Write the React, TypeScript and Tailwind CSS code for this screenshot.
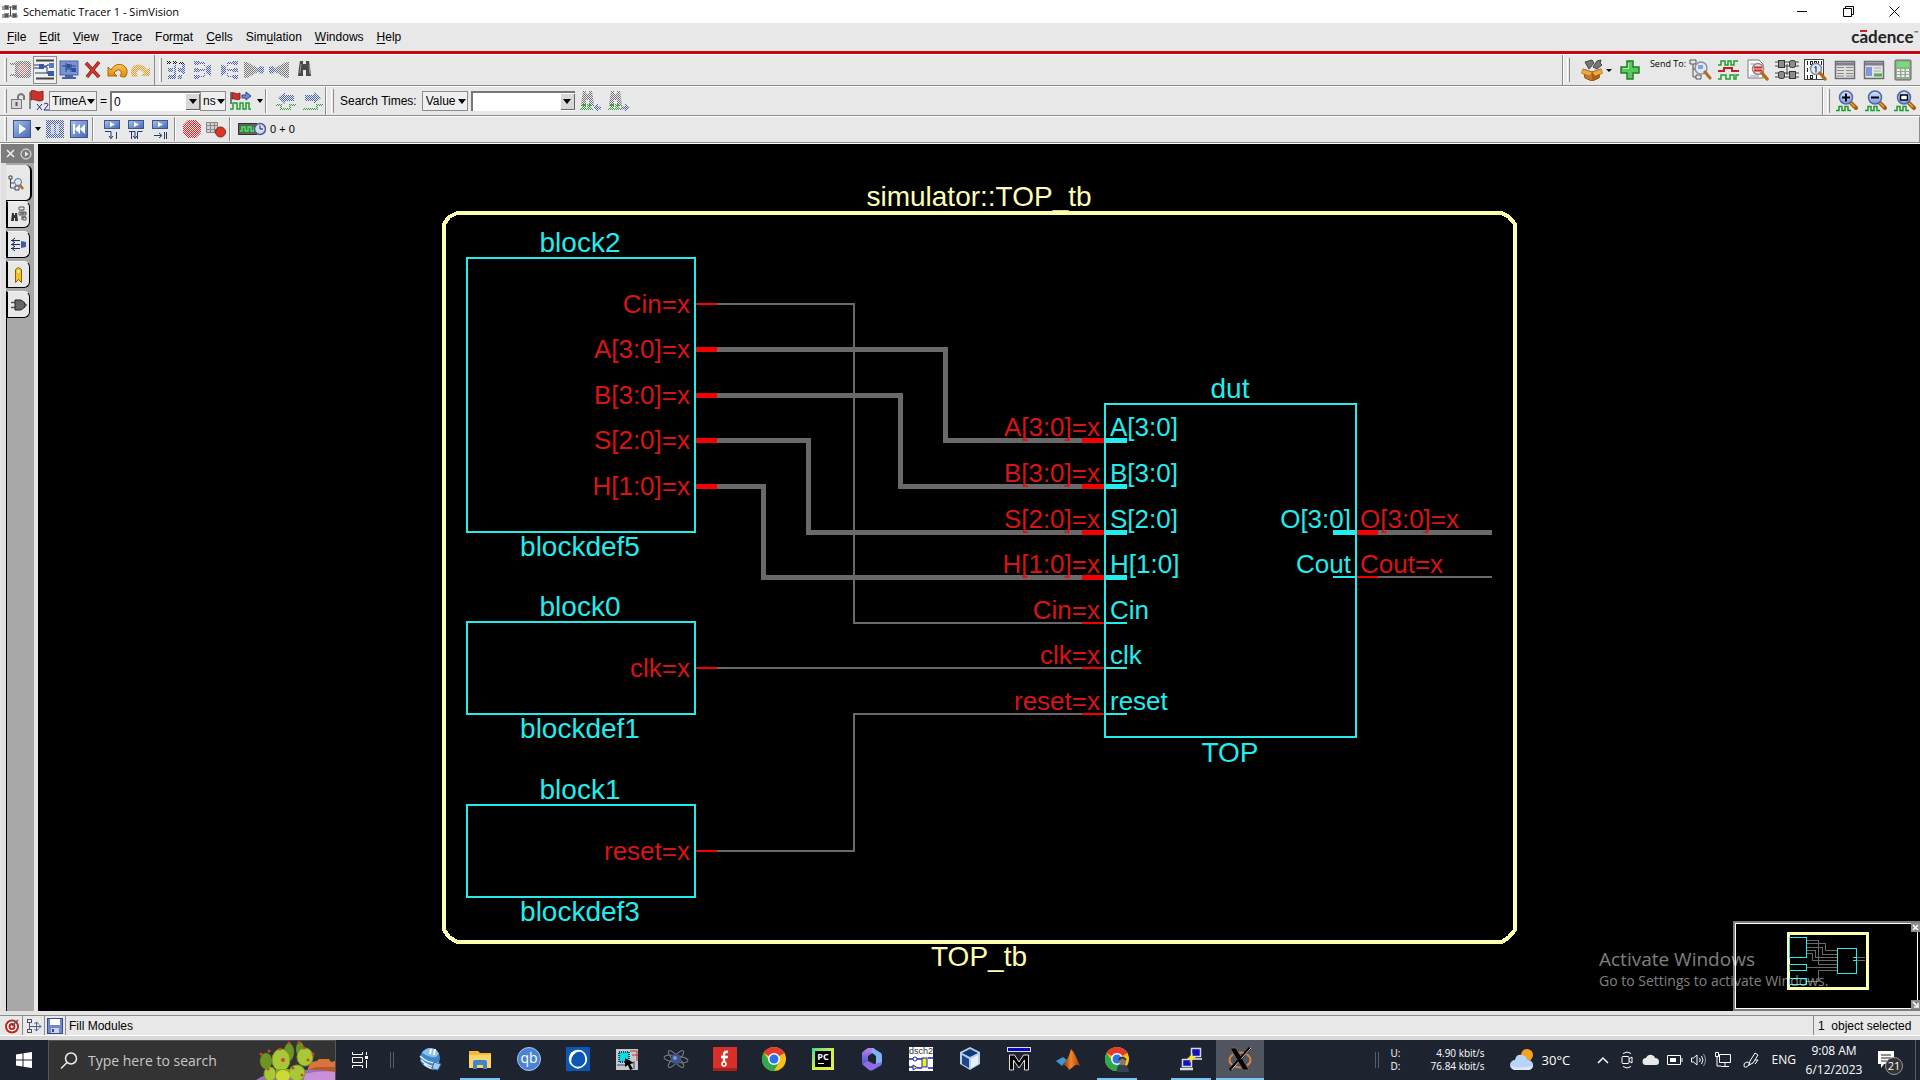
import React, { ReactNode } from "react";

type IconProps = { w?: number; h?: number; vw?: number; vh?: number; children: ReactNode };

function Icon({ w = 22, h = 22, vw, vh, children }: IconProps) {
  return (
    <svg width={w} height={h} viewBox={`0 0 ${vw ?? w} ${vh ?? h}`} fill="none" aria-hidden="true" className="block shrink-0">
      {children}
    </svg>
  );
}

function Tool({ label, children, className = "w-6 h-6" }: { label: string; children: ReactNode; className?: string }) {
  return (
    <button type="button" aria-label={label} title={label} className={`flex shrink-0 items-center justify-center ${className}`}>
      {children}
    </button>
  );
}

function Handle() {
  return <span className="h-6 w-[3px] shrink-0 border-l border-r border-l-white border-r-[#8c8c8c]" />;
}

function Divider() {
  return <span className="h-6 w-[2px] shrink-0 border-l border-r border-l-[#8c8c8c] border-r-white" />;
}

function Caret({ className = "" }: { className?: string }) {
  return (
    <svg width="8" height="5" viewBox="0 0 8 5" aria-hidden="true" className={`shrink-0 ${className}`}>
      <path d="M0 0h8L4 5z" fill="#000" />
    </svg>
  );
}

/* Shared checkerboard fills used by greyed-out tool icons */
function Stipples() {
  const tones = [
    ["st-blue", "#4a62a8"],
    ["st-red", "#e02828"],
    ["st-rose", "#c88080"],
    ["st-grey", "#777777"],
    ["st-black", "#111111"],
    ["st-green", "#2fa23a"],
    ["st-gold", "#e09a10"],
  ];
  return (
    <svg width="0" height="0" className="absolute" aria-hidden="true">
      <defs>
        {tones.map(([id, color]) => (
          <pattern key={id} id={id} width="2" height="2" patternUnits="userSpaceOnUse">
            <path d="M0 0h1v1h-1zM1 1h1v1h-1z" fill={color} shapeRendering="crispEdges" />
          </pattern>
        ))}
        <linearGradient id="g-blue" x1="0" y1="0" x2="1" y2="1">
          <stop offset="0" stopColor="#a8bfe8" />
          <stop offset="1" stopColor="#4468b4" />
        </linearGradient>
        <linearGradient id="g-gold" x1="0" y1="0" x2="0" y2="1">
          <stop offset="0" stopColor="#ffc850" />
          <stop offset="1" stopColor="#e08808" />
        </linearGradient>
        <linearGradient id="g-lens" x1="0" y1="0" x2="0" y2="1">
          <stop offset="0" stopColor="#d8e6fa" />
          <stop offset="1" stopColor="#7c9ce0" />
        </linearGradient>
        <linearGradient id="g-office" x1="0" y1="0" x2="0" y2="1">
          <stop offset="0" stopColor="#c080f0" />
          <stop offset="1" stopColor="#4858c8" />
        </linearGradient>
        <linearGradient id="g-matlab" x1="0" y1="0" x2="1" y2="0">
          <stop offset="0" stopColor="#7c1c10" />
          <stop offset="0.5" stopColor="#f08828" />
          <stop offset="1" stopColor="#b03410" />
        </linearGradient>
      </defs>
    </svg>
  );
}

const menus: [string, string, string][] = [
  ["", "F", "ile"],
  ["", "E", "dit"],
  ["", "V", "iew"],
  ["", "T", "race"],
  ["For", "m", "at"],
  ["", "C", "ells"],
  ["Sim", "u", "lation"],
  ["", "W", "indows"],
  ["", "H", "elp"],
];

function TitleBar() {
  return (
    <header className="flex h-[23px] shrink-0 items-center bg-white pr-[3px] pl-[2px]">
      <Icon w={16} h={16}>
        <g fill="#555" stroke="#888" strokeWidth="1">
          <rect x="2.500" y="1.500" width="4" height="4" />
          <rect x="10.500" y="1.500" width="4" height="4" />
          <rect x="2.500" y="9.500" width="4" height="4" />
          <rect x="10.500" y="9.500" width="4" height="4" />
        </g>
        <path d="M0 3h2M0 5h2M0 11h2M0 13h2M7 3h3M7 12h3M8.500 3v9M15 12h1" stroke="#444" />
      </Icon>
      <h1 className="ml-[5px] flex-1 font-['Open_Sans','Noto_Sans',sans-serif] text-[11px] leading-4 text-black">Schematic Tracer 1 - SimVision</h1>
      <Tool label="Minimize" className="h-5 w-[46px]">
        <Icon w={10} h={10}><path d="M0 4.500h10" stroke="#000" /></Icon>
      </Tool>
      <Tool label="Restore" className="h-5 w-[46px]">
        <Icon w={11} h={11}><path d="M.5 2.500h8v8h-8zM2.500 2.500v-2h8v8h-2" stroke="#000" /></Icon>
      </Tool>
      <Tool label="Close" className="h-5 w-[46px]">
        <Icon w={11} h={11}><path d="M.5.5l10 10M10.500.5l-10 10" stroke="#000" /></Icon>
      </Tool>
    </header>
  );
}

function MenuBar() {
  return (
    <nav className="flex h-[31px] shrink-0 items-center border-b-[3px] border-[#c80510] pl-[7px]">
      {menus.map(([a, b, c]) => (
        <button type="button" key={a + b + c} className="mr-[13px] text-xs leading-4 text-black">
          {a}
          <span className="underline underline-offset-2">{b}</span>
          {c}
        </button>
      ))}
      <div className="relative mr-[2px] ml-auto flex items-start font-['Lato',sans-serif] text-[17px] leading-5 font-bold text-[#222]">
        cadence<span className="text-[6px] leading-3 font-normal">™</span>
        <span className="absolute top-[3px] left-[9px] h-[2px] w-[7px] bg-[#d02030]" />
      </div>
    </nav>
  );
}

/* Toolbar glyphs */
const StippledNodes = ({ flip = false }: { flip?: boolean }) => (
  <Icon>
    <g transform={flip ? "translate(22 0) scale(-1 1)" : undefined} fill="url(#st-blue)">
      <rect x="2" y="2" width="5" height="4" /><rect x="2" y="9" width="5" height="4" /><rect x="2" y="16" width="5" height="4" />
      <path d="M14 8l5-3v12l-5-3z" />
      <path d="M7 3h6v5h-1V5H7zM7 10h6v2H7zM7 17h5v-4h1v5H7z" />
    </g>
  </Icon>
);
const StippledCone = ({ flip = false }: { flip?: boolean }) => (
  <Icon>
    <g transform={flip ? "translate(22 0) scale(-1 1)" : undefined}>
      <path d="M1 3h3l11 6v4L4 19H1z" fill="url(#st-grey)" />
      <path d="M14 11l3-4 4 1v6l-4 1z" fill="url(#st-blue)" />
    </g>
  </Icon>
);
const ZoomGlyph = ({ mark }: { mark: "plus" | "minus" | "rect" }) => (
  <Icon w={24} h={22}>
    <path d="M1 20.500h3v-4h3v4h3v-4h3v4h3" stroke="#1f9a2c" strokeWidth="1.500" />
    <path d="M15 12l6 6" stroke="#a35a12" strokeWidth="4" strokeLinecap="round" />
    <path d="M15 12l5 5" stroke="#e8a040" strokeWidth="1.500" />
    <circle cx="11" cy="7.500" r="6.500" fill="url(#g-lens)" stroke="#5068a8" strokeWidth="1.500" />
    {mark === "plus" && <path d="M7 7.500h8M11 3.500v8" stroke="#000" strokeWidth="2" />}
    {mark === "minus" && <path d="M7 7.500h8" stroke="#000" strokeWidth="2" />}
    {mark === "rect" && <rect x="7.500" y="5" width="7" height="5" stroke="#000" fill="#fff" strokeWidth="1.500" />}
  </Icon>
);
const Bino = ({ fill = "#4a4a4a" }: { fill?: string }) => (
  <path d="M6 2h3v3h3V2h3l1 6 1 9h-5v-6H9v6H4l1-9z" fill={fill} />
);
const SearchTimeGlyph = ({ left = false }: { left?: boolean }) => (
  <Icon w={24} h={22}>
    <g transform="translate(-2 -1)"><Bino fill="url(#st-grey)" /></g>
    <path d="M1 19h3v-4h2v4h3v-4h2v4h3" stroke="url(#st-green)" strokeWidth="2" />
    <path d={left ? "M14 17.500l5-4v3h3v3h-3v2z" : "M23 17.500l-5-4v3h-4v3h4v2z"} fill="url(#st-blue)" />
  </Icon>
);
const StepGlyph = ({ d }: { d: string }) => (
  <Icon w={18} h={22}>
    <rect x="1.500" y="2.500" width="15" height="8" fill="url(#g-blue)" stroke="#3c5490" />
    <path d="M7 4l5 2.500L7 9z" fill="#fff" />
    <path d={d} stroke="#25376e" strokeWidth="1" />
  </Icon>
);

const selectBase = "h-5 appearance-none border border-[#8c8c8c] bg-[#efefef] text-xs leading-4 text-black";

function Toolbars() {
  return (
    <div className="flex shrink-0 flex-col border-b border-white">
      <div className="flex h-8 items-stretch border-t border-b border-t-white border-b-[#8c8c8c]">
        <div className="flex items-center border-r border-[#8c8c8c] pr-[1px] pl-1">
          <Handle />
          <Tool label="Select drivers" className="ml-[2px] h-6 w-6">
            <Icon>
              <rect x="5" y="2" width="16" height="17" rx="3" fill="url(#st-grey)" />
              <circle cx="13" cy="10.500" r="5" fill="#e8e8e8" />
              <circle cx="13" cy="10.500" r="5" fill="url(#st-rose)" />
              <path d="M0 4h5v2H0zM0 15h6v2H0z" fill="url(#st-grey)" />
            </Icon>
          </Tool>
          <Tool label="Schematic" className="h-7 w-6 border border-[#8c8c8c] bg-[#f0f0f0]">
            <Icon>
              <path d="M2 1.500h18M2 19.500h18" stroke="#444" strokeWidth="2" />
              <path d="M0 6h5M0 9h5M9 7h4v-1h3M9 8h4v6h3M1 14h15" stroke="#25376e" />
              <rect x="5" y="5" width="5" height="5" fill="#3858a8" /><rect x="15" y="4" width="5" height="5" fill="#5878c8" /><rect x="14" y="12" width="6" height="5" fill="#3858a8" />
            </Icon>
          </Tool>
          <Tool label="Fill view">
            <Icon>
              <rect x="2" y="2" width="18" height="14" fill="#7894d4" stroke="#4a62a4" />
              <path d="M4 7h14M8 10h9M8 4v9M13 5v8" stroke="#2c4484" />
              <rect x="9" y="5" width="3" height="4" fill="#2c4c9c" /><rect x="14" y="9" width="4" height="4" fill="#2c4c9c" />
              <path d="M4 19h14M7 17h8" stroke="#4a62a4" strokeWidth="2" />
            </Icon>
          </Tool>
          <Tool label="Delete">
            <Icon>
              <path d="M4 4l13 14M17 3L5 18" stroke="#8c1c14" strokeWidth="3.500" />
              <path d="M4 4l13 14M17 3L5 18" stroke="#cc3c30" strokeWidth="2" />
            </Icon>
          </Tool>
          <Tool label="Undo">
            <Icon><path d="M2 17V8l3 3c3-6 11-8 15-2 2 3 1 7-1 9-4 0-5-1-5-1 3-4 0-8-4-5l-2 2 3 3z" fill="url(#g-gold)" stroke="#a86408" /></Icon>
          </Tool>
          <Tool label="Redo">
            <Icon><path d="M20 17V8l-3 3C14 5 6 3 2 9c-2 3-1 7 1 9 4 0 5-1 5-1-3-4 0-8 4-5l2 2-3 3z" fill="url(#st-gold)" /></Icon>
          </Tool>
        </div>
        <div className="flex flex-1 items-center gap-[1px] border-r border-[#8c8c8c] pl-[4px]">
          <Handle />
          <Tool label="Trace route" className="ml-[1px] h-6 w-6">
            <Icon>
              <path d="M2 2h4v3H2zM8 2h4v3H8zM14 3h5v2h-5z" fill="url(#st-black)" />
              <path d="M3 9h5v4H3zM13 9h6v4h-6zM3 16h6v4H3zM13 16h4v4h-4zM9 6h2v14H9zM17 5h3v10h-3z" fill="url(#st-blue)" />
            </Icon>
          </Tool>
          <Tool label="Trace fan-in" className="ml-[2px] h-6 w-6"><StippledNodes /></Tool>
          <Tool label="Trace fan-out" className="ml-[1px] h-6 w-6"><StippledNodes flip /></Tool>
          <Tool label="Input cone"><StippledCone /></Tool>
          <Tool label="Output cone"><StippledCone flip /></Tool>
          <Tool label="Find" className="ml-[1px] h-6 w-6"><Icon><Bino /><path d="M7 5l-1 9M15 6l1 9" stroke="#999" /></Icon></Tool>
        </div>
        <div className="flex items-center gap-[5px] border-l border-white pr-[5px] pl-[3px]">
          <Handle />
          <Tool label="Tools" className="ml-[6px] h-6 w-8 gap-[3px]">
            <Icon w={22} h={22}>
              <path d="M4 3l7-2 2 3-5 6zM12 8l4-6 4-1-1 3 2 2-5 4z" fill="#777" stroke="#444" />
              <path d="M2 10l9 3 9-3-2 9-7 3-7-3z" fill="#c87820" stroke="#8c5010" />
              <path d="M11 13v9l7-3 2-9z" fill="#a86018" />
              <path d="M2 10L0 14l9 3 2-4zM20 10l2 4-8 3-3-4z" fill="#f0a840" stroke="#a06018" strokeWidth=".5" />
            </Icon>
            <svg width="6" height="3" viewBox="0 0 6 3"><path d="M0 0h6L3 3z" fill="#000" /></svg>
          </Tool>
          <Tool label="Add">
            <Icon w={20} h={20}><path d="M7 1h6v6h6v6h-6v6H7v-6H1V7h6z" fill="#5cc85c" stroke="#1c8028" strokeWidth="1.500" /><path d="M8.500 3v5.500H3" stroke="#b0f0a8" /></Icon>
          </Tool>
          <span className="-mr-[3px] mb-3 ml-[3px] text-[9px] leading-3 font-['Open_Sans',sans-serif] text-black">Send To:</span>
          <Tool label="Design browser">
            <Icon w={24} h={22}>
              <path d="M2 1h6v4H2zM8 16h5v4H8zM5 5v13h3M5 10h5" stroke="#555" fill="none" />
              <circle cx="13" cy="9" r="6" fill="#dfe8f8" stroke="#8490a8" strokeWidth="1.500" />
              <rect x="10" y="6" width="5" height="4" fill="#8aa0d8" />
              <path d="M17 13l5 6" stroke="#b46a18" strokeWidth="3" strokeLinecap="round" />
            </Icon>
          </Tool>
          <Tool label="Waveform">
            <Icon>
              <path d="M0 6h3V2h4v4h3V2h3v4h3V2h4" stroke="#1fa030" strokeWidth="1.500" />
              <path d="M0 12h6V9h8v3h7" stroke="#c02028" strokeWidth="2" />
              <path d="M0 20h3v-4h5v4h4v-4h4v4h2v-4h3" stroke="#1fa030" strokeWidth="1.500" />
            </Icon>
          </Tool>
          <Tool label="Source browser">
            <Icon w={24} h={22}>
              <path d="M2 1h11l4 4v14H2z" fill="#fff" stroke="#777" />
              <circle cx="12" cy="10" r="5.500" fill="#f0d8d8" stroke="#8c8c8c" strokeWidth="1.500" />
              <path d="M8 8.500h8M8 11.500h8" stroke="#d02828" strokeWidth="2" />
              <path d="M4 5h5M4 17h9" stroke="#999" />
              <path d="M16 14l5 6" stroke="#b46a18" strokeWidth="3.500" strokeLinecap="round" />
            </Icon>
          </Tool>
          <Tool label="Schematic tracer">
            <Icon w={24} h={22}>
              <path d="M0 3h24M0 7h24M0 14h24M0 18h24M12 5v11" stroke="#444" />
              <g fill="#8c8c8c" stroke="#333">
                <rect x="3.500" y="1.500" width="6" height="7" /><rect x="14.500" y="1.500" width="6" height="7" rx="2" />
                <rect x="3.500" y="12.500" width="6" height="7" rx="2" /><rect x="14.500" y="12.500" width="6" height="7" />
              </g>
            </Icon>
          </Tool>
          <Tool label="Memory viewer">
            <Icon w={24} h={22}>
              <rect x=".5" y=".5" width="19" height="20" fill="#fff" stroke="#444" />
              <g stroke="#222"><path d="M3.500 2v4M14.500 2v4M3.500 9v4M3.500 16v4M12.500 16v4M17.500 2v4" /><rect x="6.500" y="2.500" width="2" height="3" /><rect x="10.500" y="2.500" width="2" height="3" /><rect x="6.500" y="16.500" width="2" height="3" /></g>
              <circle cx="12" cy="10" r="5.500" fill="#dfeaf8" stroke="#7c8cac" strokeWidth="1.500" />
              <path d="M10.500 8.500l1.500-1v6" stroke="#111" />
              <path d="M16 14l5 6" stroke="#b46a18" strokeWidth="3.500" strokeLinecap="round" />
            </Icon>
          </Tool>
          <Tool label="Register window">
            <Icon>
              <rect x="1.500" y="2.500" width="19" height="17" fill="#e0e0dc" stroke="#6c6c74" strokeWidth="1.500" />
              <path d="M2 5h18" stroke="#7c8090" strokeWidth="3" />
              <path d="M3 8.500h7M3 11.500h7M3 14.500h7M3 17h7M12 8.500h7M12 11.500h7M12 14.500h7M12 17h7" stroke="#888" />
            </Icon>
          </Tool>
          <Tool label="Properties">
            <Icon>
              <rect x="1.500" y="2.500" width="19" height="17" fill="#e4e4e0" stroke="#6c6c74" strokeWidth="1.500" />
              <path d="M2 5h18" stroke="#7c8090" strokeWidth="3" />
              <rect x="3" y="8" width="6" height="9" fill="#8098d8" /><path d="M11 9h7M11 12h7" stroke="#aaa" /><path d="M11 16h8" stroke="#48b048" strokeWidth="3" />
            </Icon>
          </Tool>
          <Tool label="Calculator">
            <Icon w={18} h={22}>
              <rect x="1" y="1" width="16" height="20" rx="1" fill="#98a898" stroke="#606860" />
              <rect x="3" y="3" width="12" height="5" fill="#70e070" />
              <path d="M3 11h12M3 14h12M3 17h12" stroke="#e8f4e8" strokeWidth="2" strokeDasharray="3 1.500" />
            </Icon>
          </Tool>
        </div>
      </div>

      <div className="flex h-[30px] items-stretch border-t border-b border-t-white border-b-[#8c8c8c]">
        <div className="flex items-center border-r border-[#8c8c8c] pl-1">
          <Handle />
          <Tool label="Lock" className="ml-[3px] h-6 w-[18px]">
            <Icon w={18} h={20}>
              <path d="M8 9V5q3-4 6 0v4" stroke="#777" strokeWidth="2" />
              <rect x="1.500" y="8.500" width="10" height="9" fill="#d8d8d8" stroke="#777" /><path d="M6.500 11v4" stroke="#555" strokeWidth="2" />
            </Icon>
          </Tool>
          <Tool label="Primary cursor" className="h-6 w-[21px]">
            <Icon w={21} h={22}>
              <path d="M2 2v17" stroke="#888" strokeWidth="2" />
              <path d="M3 1c4-2 6 3 12 0v9c-5 3-8-2-12 0z" fill="#c8342c" stroke="#902018" />
              <path d="M9 14l5 6M14 14l-5 6M16 14q4-2 4 1l-4 5h5" stroke="#1c2c80" />
            </Icon>
          </Tool>
          <span className="relative flex h-5 items-center">
            <select aria-label="Cursor" className={`${selectBase} w-12 pl-[2px]`}>
              <option>TimeA</option>
            </select>
            <Caret className="pointer-events-none absolute right-[2px]" />
          </span>
          <span className="w-[13px] text-center text-xs leading-4">=</span>
          <div className="flex h-5 w-[90px] items-center border-t-2 border-l-2 border-[#777] bg-white">
            <input aria-label="Time" defaultValue="0" className="h-full min-w-0 flex-1 bg-white pl-[2px] text-xs leading-4 text-black outline-none" />
            <button type="button" aria-label="Time history" className="flex h-4 w-[14px] items-center justify-center border-r border-b border-[#666] bg-[#d8d8d8]"><Caret /></button>
          </div>
          <span className="relative flex h-5 items-center">
            <select aria-label="Unit" className={`${selectBase} w-[26px] pl-[2px]`}>
              <option>ns</option>
            </select>
            <Caret className="pointer-events-none absolute right-[1px]" />
          </span>
          <Tool label="Go to cursor" className="ml-[3px] h-6 w-[34px] gap-1">
            <Icon w={24} h={22}>
              <path d="M2 2v12" stroke="#777" strokeWidth="2" /><path d="M3 3c3-1 4 2 8 0v6c-4 2-5-1-8 0z" fill="#c8342c" stroke="#802018" />
              <path d="M13 5h4V2l5 4-5 4V8h-4z" fill="#6c8cd0" stroke="#2c4488" />
              <path d="M1 19h3v-6h4v6h3v-6h3v6h3v-6h3v6h2" stroke="#1fa030" strokeWidth="1.500" />
            </Icon>
            <svg width="6" height="4" viewBox="0 0 6 4"><path d="M0 0h6L3 4z" fill="#000" /></svg>
          </Tool>
          <span className="ml-[2px] flex"><Divider /></span>
          <Tool label="Previous edge" className="ml-[7px] h-6 w-6">
            <Icon><path d="M3 8l7-6v3h9v6h-9v3z" fill="url(#st-blue)" /><path d="M1 15h5v4h9v-4h6" stroke="url(#st-green)" strokeWidth="2" /></Icon>
          </Tool>
          <Tool label="Next edge" className="ml-[3px] h-6 w-6">
            <Icon><path d="M19 8l-7-6v3H3v6h9v3z" fill="url(#st-blue)" /><path d="M1 19h14v-4h6" stroke="url(#st-green)" strokeWidth="2" /></Icon>
          </Tool>
        </div>
        <div className="flex flex-1 items-center border-r border-l border-l-white border-r-[#8c8c8c] pl-[4px]">
          <Handle />
          <label htmlFor="search-kind" className="mr-[5px] ml-[6px] text-xs leading-4">Search Times:</label>
          <span className="relative flex h-5 items-center">
            <select id="search-kind" className={`${selectBase} w-[46px] pl-[3px]`}>
              <option>Value</option>
            </select>
            <Caret className="pointer-events-none absolute right-[2px]" />
          </span>
          <div className="ml-[3px] flex h-5 w-[104px] items-center border-t-2 border-l-2 border-[#777] bg-white">
            <input aria-label="Search value" className="h-full min-w-0 flex-1 bg-white pl-[2px] text-xs leading-4 outline-none" />
            <button type="button" aria-label="Value history" className="flex h-4 w-[14px] items-center justify-center border-r border-b border-[#666] bg-[#d8d8d8]"><Caret /></button>
          </div>
          <Tool label="Search previous" className="ml-1 h-6 w-6"><SearchTimeGlyph left /></Tool>
          <Tool label="Search next" className="ml-1 h-6 w-6"><SearchTimeGlyph /></Tool>
        </div>
        <div className="flex items-center gap-[5px] border-l border-white pr-[3px] pl-[3px]">
          <Handle />
          <Tool label="Zoom in"><ZoomGlyph mark="plus" /></Tool>
          <Tool label="Zoom out"><ZoomGlyph mark="minus" /></Tool>
          <Tool label="Zoom fit"><ZoomGlyph mark="rect" /></Tool>
        </div>
      </div>

      <div className="flex h-[27px] items-center border-t border-r border-b border-t-white border-r-[#8c8c8c] border-b-[#8c8c8c] pb-[2px] pl-1">
        <Handle />
        <Tool label="Run" className="ml-[6px] h-5 w-[18px]">
          <Icon w={18} h={18}><rect x=".5" y=".5" width="17" height="17" fill="url(#g-blue)" stroke="#3c5490" /><path d="M6 4l7 5-7 5z" fill="#fff" /></Icon>
        </Tool>
        <svg width="6" height="4" viewBox="0 0 6 4" className="mr-[5px] ml-[4px]"><path d="M0 0h6L3 4z" fill="#000" /></svg>
        <Tool label="Pause" className="h-5 w-[18px]">
          <Icon w={18} h={18}><rect width="18" height="18" fill="url(#st-blue)" /><path d="M5 4h3v10H5zM10 4h3v10h-3z" fill="#e8e8f4" opacity=".7" /></Icon>
        </Tool>
        <Tool label="Restart" className="ml-[6px] h-5 w-[18px]">
          <Icon w={18} h={18}><rect x=".5" y=".5" width="17" height="17" fill="url(#g-blue)" stroke="#3c5490" /><path d="M3 4h2v10H3zM10 4v10L5 9zM15 4v10l-5-5z" fill="#fff" /></Icon>
        </Tool>
        <span className="ml-1 flex"><Divider /></span>
        <Tool label="Step in" className="ml-[9px] h-6 w-[18px]"><StepGlyph d="M2 13.500h6v7M6 18l2 2.500 2-2.500M13.500 14v7" /></Tool>
        <Tool label="Step over" className="ml-[6px] h-6 w-[18px]"><StepGlyph d="M2 13.500h6v7M4.500 14v7M10.500 21v-7.500h5M6 18l2 2.500 2-2.500" /></Tool>
        <Tool label="Step out" className="ml-[6px] h-6 w-[18px]"><StepGlyph d="M3 17.500h7M8 15l3 2.500-3 2.500M13.500 14v7M15.500 14v7" /></Tool>
        <span className="ml-[5px] flex"><Divider /></span>
        <Tool label="Stop" className="ml-[7px] h-5 w-[18px]">
          <Icon w={18} h={18}><path d="M5 0h8l5 5v8l-5 5H5l-5-5V5z" fill="url(#st-red)" /></Icon>
        </Tool>
        <Tool label="Breakpoints" className="ml-[5px] h-5 w-5">
          <Icon w={20} h={18}><path d="M.5 2.500h11v10H.5zM4.500 2v11M8.500 2v11M0 5.500h12M0 9.500h12" stroke="#888" fill="#d0d0d0" /><circle cx="14.500" cy="12" r="5" fill="#d83828" stroke="#902018" /></Icon>
        </Tool>
        <span className="ml-[3px] flex"><Divider /></span>
        <span className="ml-[7px] flex items-center gap-1">
          <Icon w={28} h={18}>
            <rect x=".5" y="3.500" width="18" height="11" fill="#5c6460" stroke="#333" /><path d="M2 11h2V7h3v4h3V7h3v4h3V7" stroke="#40f050" strokeWidth="1.500" />
            <circle cx="22" cy="9" r="5.500" fill="#d0dcf4" stroke="#4a5e90" strokeWidth="1.500" /><path d="M22 5.500V9h3" stroke="#222" />
          </Icon>
          <span className="text-[11px] leading-4">0 + 0</span>
        </span>
      </div>
    </div>
  );
}

const sideTabs: { label: string; glyph: ReactNode }[] = [
  { label: "Design browser", glyph: <><path d="M2 2h3v3H2zM3.500 5v9M3.500 9h4M3.500 14h4M8 12h4v4H8z" stroke="#445" /><circle cx="11" cy="8" r="3.500" fill="#dfe8f8" stroke="#5068a8" /><path d="M13 11l3 4" stroke="#b46a18" strokeWidth="2.500" /></> },
  { label: "Find", glyph: <><path d="M2 7h2v2h1V7h2l1 8H5v-3H4v3H1z" fill="#333" /><path d="M9 1h5v3H9zM12 4v10M12 7h4M12 11h4M9 6h2v3H9zM13 6h3v3h-3zM13 11h3v3h-3z" stroke="#555" /></> },
  { label: "Connectivity", glyph: <><path d="M1 4.500h9M1 8.500h9M1 12.500h9M5 2l-3 2.500L5 7M5 6L2 8.500 5 11M5 10l-3 2.500L5 15" stroke="#1c2c60" /><path d="M11 5l5 1v5l-5 1z" fill="#3c5ca8" /></> },
  { label: "Bookmarks", glyph: <><path d="M5.500 3.500l3-2 3 2v13l-3-3-3 3z" fill="#f8c020" stroke="#8c6000" /><path d="M8.500 4v3" stroke="#fff" strokeWidth="1.500" /></> },
  { label: "Modules", glyph: <><path d="M1 6.500h4M1 11.500h4M14 9h3" stroke="#555" strokeWidth="1.500" /><path d="M5 4h6l4 3v4l-4 3H5z" fill="#666" stroke="#222" /></> },
];

function SideBar() {
  return (
    <aside className="flex w-[38px] shrink-0 flex-col border-r-4 border-l border-[#e8e8e8] bg-[#a8a8a8]">
      <div className="flex h-[19px] items-center justify-center gap-[5px] bg-[#7c7c7c] pl-[2px]">
        <button type="button" aria-label="Close sidebar"><Icon w={9} h={9}><path d="M1 1l7 7M8 1L1 8" stroke="#f0f0f0" strokeWidth="1.500" /></Icon></button>
        <button type="button" aria-label="Expand sidebar"><Icon w={12} h={12}><circle cx="6" cy="6" r="5" stroke="#f0f0f0" /><path d="M5 3.500L8.500 6 5 8.500z" fill="#f0f0f0" /></Icon></button>
      </div>
      <div className="flex flex-1 items-stretch">
        <span className="w-[5px] shrink-0 bg-[#e0e0e0]" />
        <div className="flex flex-1 flex-col items-start pt-[2px]">
          {sideTabs.map((tab, i) => (
            <button
              key={tab.label}
              type="button"
              aria-label={tab.label}
              className={
                i === 0
                  ? "flex h-9 w-[26px] items-center justify-center rounded-r-md border-r-2 border-b border-black bg-[#e8e8e8] pr-1"
                  : "mb-[3px] flex h-[27px] w-6 items-center justify-center rounded-br-md rounded-tr-md border border-l-2 border-black border-t-[#f4f4f4] bg-[#e8e8e8]"
              }
            >
              <Icon w={18} h={18}>{tab.glyph}</Icon>
            </button>
          ))}
          <span className="-mt-1 w-px flex-1 bg-black" />
        </div>
      </div>
    </aside>
  );
}

const CY = "#22ecec";
const RED = "#d81414";
const GREY = "#696969";
const YEL = "#ffffb0";

const sourceBlocks = [
  { name: "block2", def: "blockdef5", y: 258, h: 274, pins: [
    { t: "Cin=x", y: 304, bus: false }, { t: "A[3:0]=x", y: 349.5, bus: true }, { t: "B[3:0]=x", y: 395.5, bus: true },
    { t: "S[2:0]=x", y: 440.5, bus: true }, { t: "H[1:0]=x", y: 486.5, bus: true } ] },
  { name: "block0", def: "blockdef1", y: 622, h: 92, pins: [{ t: "clk=x", y: 668, bus: false }] },
  { name: "block1", def: "blockdef3", y: 805, h: 92, pins: [{ t: "reset=x", y: 851, bus: false }] },
];
const dutInputs = [
  { t: "A[3:0]", y: 440.5, bus: true }, { t: "B[3:0]", y: 486.5, bus: true }, { t: "S[2:0]", y: 532.5, bus: true },
  { t: "H[1:0]", y: 577.5, bus: true }, { t: "Cin", y: 623, bus: false }, { t: "clk", y: 668, bus: false }, { t: "reset", y: 714, bus: false },
];
const dutOutputs = [{ t: "O[3:0]", y: 532.5, bus: true }, { t: "Cout", y: 577, bus: false }];
const wires = [
  { d: "M717 349.5H945.500V440.500H1082", w: 5 },
  { d: "M717 395.5H900.500V486.500H1082", w: 5 },
  { d: "M717 440.5H808.500V532.500H1082", w: 5 },
  { d: "M717 486.5H763.500V577.500H1082", w: 5 },
  { d: "M717 304H854V623H1082", w: 2 },
  { d: "M717 668H1082", w: 2 },
  { d: "M717 851H854V714H1082", w: 2 },
  { d: "M1378 532.5H1492", w: 5 },
  { d: "M1378 577H1492", w: 2 },
];

function Schematic() {
  return (
    <svg viewBox="38 144 1882 867" className="block h-full w-full" role="img" aria-label="Schematic of TOP_tb" fill="none">
      <g shapeRendering="crispEdges">
        <path d="M457 213H1502L1509 217L1515 224V930L1509 937L1502 942H457L449 937L444 930V224L449 217Z" stroke={YEL} strokeWidth="4" strokeLinejoin="round" />
        {wires.map((w) => <path key={w.d} d={w.d} stroke={GREY} strokeWidth={w.w} />)}
        {sourceBlocks.map((b) => (
          <g key={b.name}>
            <rect x="467" y={b.y} width="228" height={b.h} stroke={CY} strokeWidth="2" />
            {b.pins.map((p) => <path key={p.t} d={`M696 ${p.y}H717`} stroke="#f40000" strokeWidth={p.bus ? 5 : 2} />)}
          </g>
        ))}
        <rect x="1105" y="404" width="251" height="333" stroke={CY} strokeWidth="2" />
        {dutInputs.map((p) => (
          <g key={p.t} strokeWidth={p.bus ? 5 : 2}>
            <path d={`M1082 ${p.y}H1104`} stroke="#f40000" />
            <path d={`M1106 ${p.y}H1127`} stroke={CY} />
          </g>
        ))}
        {dutOutputs.map((p) => (
          <g key={p.t} strokeWidth={p.bus ? 5 : 2}>
            <path d={`M1333 ${p.y}H1356`} stroke={CY} />
            <path d={`M1357 ${p.y}H1378`} stroke="#f40000" />
          </g>
        ))}
      </g>
      <g className="font-['Liberation_Sans',Arial,sans-serif] text-[28px]" textAnchor="middle">
        <text x="979" y="206" fill={YEL}>simulator::TOP_tb</text>
        <text x="979" y="966" fill={YEL}>TOP_tb</text>
        <text x="1230" y="398" fill={CY}>dut</text>
        <text x="1230" y="762" fill={CY}>TOP</text>
        {sourceBlocks.map((b) => (
          <g key={b.name} fill={CY}>
            <text x="580" y={b.y - 6}>{b.name}</text>
            <text x="580" y={b.y + b.h + 24}>{b.def}</text>
          </g>
        ))}
      </g>
      <g className="font-['Liberation_Sans',Arial,sans-serif] text-[26px]">
        {sourceBlocks.flatMap((b) => b.pins).map((p) => (
          <text key={p.t} x="690" y={Math.floor(p.y) + 9} textAnchor="end" fill={RED}>{p.t}</text>
        ))}
        {dutInputs.map((p) => (
          <g key={p.t}>
            <text x="1100" y={Math.floor(p.y) - 4} textAnchor="end" fill={RED}>{p.t}=x</text>
            <text x="1110" y={Math.floor(p.y) - 4} fill={CY}>{p.t}</text>
          </g>
        ))}
        {dutOutputs.map((p) => (
          <g key={p.t}>
            <text x="1351" y={Math.floor(p.y) - 4} textAnchor="end" fill={CY}>{p.t}</text>
            <text x="1360" y={Math.floor(p.y) - 4} fill={RED}>{p.t}=x</text>
          </g>
        ))}
      </g>
    </svg>
  );
}

function MiniMap() {
  return (
    <div className="absolute right-0 bottom-0 h-[90px] w-[187px] border-2 border-r-0 border-[#7c7c7c] bg-black">
      <div className="mr-[2px] h-full border border-white">
        <svg viewBox="1736 924 181 84" className="h-full w-full" fill="none" shapeRendering="crispEdges" aria-hidden="true">
          <rect x="1788.500" y="933.500" width="79" height="55" stroke={YEL} strokeWidth="3" />
          <g stroke={CY}>
            <rect x="1789.500" y="937.500" width="17" height="20" /><rect x="1789.500" y="964.500" width="17" height="6" /><rect x="1789.500" y="978.500" width="17" height="6" />
            <rect x="1837.500" y="948.500" width="19" height="25" /><path d="M1853 957.500h4M1853 960.500h4" />
          </g>
          <path d="M1807 940.500H1818.500V964.500H1837M1807 943.500H1825.500V950.500H1837M1807 947.500H1822.500V954.500H1837M1807 950.500H1815.500V957.500H1837M1807 953.500H1812.500V960.500H1837M1807 967.500H1837M1807 981.500H1818.500V970.500H1837M1857 957.500H1865M1857 960.500H1865" stroke={GREY} />
        </svg>
      </div>
      <button type="button" aria-label="Close overview" className="absolute top-0 right-0 bg-[#8c8c8c]">
        <Icon w={9} h={9}><path d="M2 2l5 5M7 2L2 7" stroke="#fff" strokeWidth="1.500" /></Icon>
      </button>
      <button type="button" aria-label="Resize overview" className="absolute right-0 bottom-0 bg-[#8c8c8c]">
        <Icon w={9} h={9}><path d="M2 2l5 5M7 3v4H3" stroke="#fff" strokeWidth="1.500" /></Icon>
      </button>
    </div>
  );
}

function StatusBar() {
  return (
    <footer className="flex h-[29px] shrink-0 flex-col border-t-4 border-b-4 border-t-[#e4e4e4] border-b-[#d8d8d8]">
      <div className="flex flex-1 items-stretch border-t border-b border-t-[#8c8c8c] border-b-white">
        <Tool label="Target" className="w-[23px] border-r border-[#8c8c8c] pl-[1px]">
          <Icon w={16} h={16}><circle cx="8" cy="8.500" r="6" fill="#fff" stroke="#b82820" strokeWidth="2" /><circle cx="8" cy="8.500" r="2.500" fill="#fff" stroke="#b82820" strokeWidth="2" /><path d="M8 8l6-6" stroke="#555" strokeWidth="1.500" /></Icon>
        </Tool>
        <Tool label="Expand" className="w-[22px] border-r border-[#8c8c8c] pl-[1px]">
          <Icon w={16} h={16}><rect x="1.500" y="1.500" width="4" height="3" stroke="#555" /><rect x="1.500" y="11.500" width="4" height="3" stroke="#555" /><path d="M3.500 5v6M3 8.500h12M10.500 4v9M8.500 6l2-2 2 2M8.500 11l2 2 2-2M13 6.500l2 2-2 2" stroke="#4a5e90" /></Icon>
        </Tool>
        <Tool label="Save" className="w-[21px] border-r border-[#8c8c8c]">
          <Icon w={16} h={16}><rect x=".5" y=".5" width="15" height="15" fill="#7088c8" stroke="#34488c" /><rect x="3" y="1" width="10" height="6" fill="#fff" /><rect x="4" y="10" width="8" height="5" fill="#d0d4e0" /><path d="M6 11v3" stroke="#34488c" strokeWidth="2" /></Icon>
        </Tool>
        <span className="ml-[3px] flex flex-1 items-center text-xs leading-4">Fill Modules</span>
        <span className="flex w-[107px] items-center border-l border-[#8c8c8c] pl-1 text-xs leading-4 whitespace-pre">1  object selected</span>
      </div>
    </footer>
  );
}

function Chrome({ person = false }: { person?: boolean }) {
  return (
    <Icon w={26} h={26}>
      <circle cx="13" cy="13" r="12" fill="#fbc116" />
      <path d="M13 13L2.600 7A12 12 0 0 1 23.400 7z" fill="#e33b2e" />
      <path d="M13 13h-6L2.600 7A12 12 0 0 0 13 25l5-9z" fill="#2da94f" />
      <circle cx="13" cy="13" r="6" fill="#fff" /><circle cx="13" cy="13" r="4.500" fill="#2d74e8" />
      {person && <><path d="M13 26q-1-8 5-8t7 8z" fill="#3a4450" /><circle cx="18.500" cy="15.500" r="3.500" fill="#8c7868" /><path d="M15 14q3-5 7 0" stroke="#333" strokeWidth="2" /></>}
    </Icon>
  );
}

const apps: { label: string; glyph: ReactNode; running?: boolean }[] = [
  { label: "Network client", glyph: <Icon w={24} h={24}><circle cx="11" cy="11" r="10" fill="#3c88c8" /><path d="M3 6q3-5 9-5 6 1 8 6l-3 3q-6 1-14-4z" fill="#8cc0e8" /><path d="M11 2h2l-1 5h-2zM15 2h2l-1 6h-2z" fill="#fff" /><path d="M1 9q8 8 19 7M2 13q7 7 17 7M5 17q5 5 12 5" stroke="#e4f0fa" strokeWidth="1.500" /><path d="M15 15l7 2-3 6-6-1z" fill="#a4cce8" stroke="#2c68a0" /></Icon> },
  { label: "File Explorer", running: true, glyph: <Icon w={24} h={22}><path d="M1 3h9l2 2h11v15H1z" fill="#f4b83c" /><path d="M1 7h22v13H1z" fill="#fcd468" /><path d="M5 21v-7q0-2 2-2h10q2 0 2 2v7h-4v-4H9v4z" fill="#3c88c8" /></Icon> },
  { label: "qBittorrent", glyph: <span className="flex size-6 items-center justify-center rounded-full border border-[#a8c8f0] bg-[#4a84d0] pb-[3px] font-['Open_Sans',sans-serif] text-sm leading-4 text-white">qb</span> },
  { label: "Ring app", glyph: <Icon w={24} h={24}><rect width="24" height="24" fill="#0c58b0" /><circle cx="12" cy="12" r="8.500" stroke="#fff" strokeWidth="1.500" /><path d="M5 6q6-5 12-2-8 0-11 6-2 5 1 9-6-5-2-13zM20 15q-3 7-11 7 8-2 10-7 1-5-2-9 5 3 3 9z" fill="#fff" /></Icon> },
  { label: "Circuit tool", glyph: <Icon w={24} h={24}><rect x="1" y="2" width="22" height="21" fill="#c8c8c8" /><rect x="4" y="5" width="10" height="10" fill="#10d8e0" stroke="#085060" strokeDasharray="1 1" strokeWidth="2" /><path d="M15 4h7v5M17 8h5v6" stroke="#c03030" /><path d="M2 18h8M19 14v8" stroke="#3838b0" /><path d="M10 11l9 5-4 1 3 5-3 1-2-5-3 2z" fill="#000" /></Icon> },
  { label: "Atom lab", glyph: <Icon w={26} h={24}><g stroke="#7c7c7c"><ellipse cx="13" cy="12" rx="12" ry="3.500" transform="rotate(8 13 12)" /><ellipse cx="13" cy="12" rx="11" ry="3" transform="rotate(48 13 12)" /><ellipse cx="13" cy="12" rx="11" ry="3" transform="rotate(-48 13 12)" /></g><circle cx="13" cy="12" r="5" fill="#3c5490" /><circle cx="12" cy="11" r="2" fill="#7c98d0" /></Icon> },
  { label: "Fritzing", glyph: <Icon w={24} h={24}><rect width="24" height="24" fill="#d83028" /><rect y="21" width="24" height="3" fill="#a82018" /><path d="M15 5q-4-1-4 3v7M8 10h7" stroke="#fff" strokeWidth="2.500" /><circle cx="11" cy="17" r="2" stroke="#fff" strokeWidth="1.500" /></Icon> },
  { label: "Chrome", glyph: <Chrome /> },
  { label: "PyCharm", glyph: <span className="flex size-[22px] items-center justify-center bg-gradient-to-br from-[#2ad890] via-[#c8f040] to-[#e8f060]"><span className="flex size-4 flex-col items-center bg-black font-['Open_Sans',sans-serif] text-[9px] leading-3 font-bold text-white">PC<span className="mr-1 h-px w-[6px] bg-white" /></span></span> },
  { label: "Microsoft 365", glyph: <Icon w={24} h={24}><path d="M8 1q-5 3-6 5v11l6-2V9l6-4V1z" fill="url(#g-office)" /><path d="M13 1l8 5q1 1 1 3v7l-6 3V9l-5-4z" fill="#7cb4f4" /><path d="M2 17l6-3 6 3 8-2q0 3-2 4l-7 4q-2 1-4 0z" fill="#8c6ce8" /></Icon> },
  { label: "dsch2", glyph: <span className="flex size-6 flex-col items-center bg-white font-['Liberation_Sans',sans-serif] text-[9px] leading-[9px] text-[#333]">dsch2<Icon w={24} h={15}><path d="M0 3h4M0 11h4M8 3h5M8 12h5M19 2h5M19 12h5" stroke="#2020c0" strokeWidth="1.500" /><rect x="13" y="2" width="5" height="9" fill="#f0f020" stroke="#2020c0" /><circle cx="6" cy="3" r="2" stroke="#2020c0" /><path d="M4 9l4 2.500-4 2.500z" fill="#f0f020" stroke="#2020c0" /></Icon></span> },
  { label: "VirtualBox", glyph: <Icon w={24} h={24}><path d="M12 0l10 5v12l-10 6-10-6V5z" fill="#b8d0e8" /><path d="M12 2l8 4-8 4-8-4z" fill="#14387c" /><path d="M4 8l7 4v9l-7-4z" fill="#1c4888" /><path d="M20 8l-7 4v9l7-4z" fill="#e8f0f8" /></Icon> },
  { label: "Microwind", glyph: <Icon w={24} h={24}><rect x=".5" y=".5" width="23" height="4" fill="#0808c0" stroke="#ddd" /><path d="M2.500 23V8h5l4.500 7 4.500-7h5v15h-4V13l-5.500 8-5.500-8v10z" fill="#000" stroke="#ddd" /></Icon> },
  { label: "MATLAB", glyph: <Icon w={24} h={24}><path d="M0 14l7-4 4 3-5 6z" fill="#3c98d0" /><path d="M6 18q6-4 9-16 4 4 9 17-4-3-7 1l-4 3q-2-5-7-5z" fill="url(#g-matlab)" /></Icon> },
  { label: "Chrome profile", glyph: <Chrome person />, running: true },
];

function NetStat({ k, v }: { k: string; v: string }) {
  return (
    <div className="flex justify-between"><dt>{k}</dt><dd>{v}</dd></div>
  );
}

function TaskBar() {
  return (
    <div className="flex h-10 shrink-0 items-stretch bg-[#1d2430] font-['Open_Sans','Noto_Sans',sans-serif] text-white">
      <Tool label="Start" className="w-12">
        <Icon w={16} h={16}><path d="M0 2.500L6.500 1.500V7.500H0zM7.500 1.300L16 0V7.500H7.500zM0 8.500h6.500v6L0 13.500zM7.500 8.500H16V16l-8.500-1.300z" fill="#fff" /></Icon>
      </Tool>
      <label className="flex w-72 shrink-0 items-center border-t border-r border-l border-[#555] bg-[#333] pl-[11px]">
        <Icon w={18} h={18}><circle cx="11" cy="6.500" r="5.500" stroke="#eee" strokeWidth="1.500" /><path d="M7 10.500L1 16.500" stroke="#eee" strokeWidth="1.500" /></Icon>
        <input aria-label="Search" placeholder="Type here to search" className="ml-[10px] w-0 flex-1 bg-transparent text-sm leading-5 text-white outline-none placeholder:text-[#c8c8c8] placeholder:opacity-100" />
        <Icon w={79} h={39}>
          <path d="M52 27l3-6 6-1 2-2h10l2 3 4-1v14H52z" fill="#d8743c" />
          <path d="M54 28l6-2h19v10H50z" fill="#b85828" />
          <path d="M0 39q10-7 24-7 26-6 55-1v8z" fill="#9c70b8" />
          <path d="M48 33q16-4 31-2v8H48z" fill="#c890d8" />
          <g fill="#6c9420"><ellipse cx="33" cy="11" rx="5" ry="9" /><ellipse cx="44" cy="8" rx="4" ry="7" /><ellipse cx="10" cy="20" rx="6" ry="8" /></g>
          <g fill="#a8c838" stroke="#7c9c20"><ellipse cx="25" cy="19" rx="9" ry="11" /><ellipse cx="49" cy="16" rx="8" ry="9" /><ellipse cx="14" cy="33" rx="6" ry="7" /><ellipse cx="41" cy="32" rx="8" ry="8" /></g>
          <path d="M20 28h13v11H20z" fill="#88a828" /><ellipse cx="27" cy="35" rx="7" ry="6" fill="#d0d838" />
          <g fill="#c84830"><circle cx="24" cy="8" r="1.500" /><circle cx="27" cy="19" r="2" /><circle cx="48" cy="7" r="1.500" /><circle cx="57" cy="13" r="1.500" /><circle cx="5" cy="13" r="1.500" /><circle cx="13" cy="10" r="1.500" /><circle cx="43" cy="1.500" r="1.500" /><circle cx="33" cy="2" r="1.500" /><circle cx="52" cy="19" r="1.500" /><circle cx="37" cy="27" r="1.500" /><circle cx="12" cy="28" r="1.500" /><circle cx="46" cy="34" r="1.500" /></g>
        </Icon>
      </label>
      <Tool label="Task View" className="w-12">
        <Icon w={16} h={16}><path d="M.5 0v2.500h10V0M.5 16v-2.500h10V16M.5 5.500h10v5H.5zM14.500 0v3M14.500 8v8" stroke="#fff" /><rect x="13" y="4" width="3" height="3" fill="#fff" /></Icon>
      </Tool>
      <span className="my-3 ml-[6px] w-1 border-r border-l border-[#555c68]" />
      <div className="ml-[17px] flex items-stretch">
        {apps.map((a) => (
          <button type="button" key={a.label} aria-label={a.label} className={`mr-[9px] flex w-10 items-center justify-center border-b-2 ${a.running ? "border-[#76c8f0]" : "border-transparent"}`}>
            {a.glyph}
          </button>
        ))}
        <button type="button" aria-label="PuTTY" className="ml-[25px] flex w-10 items-center justify-center border-b-2 border-[#76c8f0]">
          <Icon w={24} h={24}><rect x="12.500" y="1.500" width="9" height="8" fill="#1010c0" stroke="#d8d8d8" strokeWidth="1.500" /><path d="M11 12h12" stroke="#bbb" strokeWidth="2" /><rect x="3.500" y="12.500" width="9" height="7" fill="#1010c0" stroke="#d8d8d8" strokeWidth="1.500" /><path d="M1 22h13" stroke="#ddd" strokeWidth="2.500" /><path d="M14 6l-6 6 4 0-2 4 7-6h-4z" fill="#f8e820" /></Icon>
        </button>
        <button type="button" aria-label="X Server" className="ml-[5px] flex w-12 items-center justify-center border-b-2 border-[#76c8f0] bg-[#51555f]">
          <Icon w={24} h={24}><ellipse cx="12" cy="13" rx="10.500" ry="7.500" stroke="#e08040" strokeWidth="2" /><path d="M2 1h6l13 22h-6z" fill="#000" stroke="#666" /><path d="M22 1L13 11M10 14L2 23" stroke="#000" strokeWidth="3" /><path d="M23 1L13.500 11.500M10.500 15L3.500 23" stroke="#ddd" /></Icon>
        </button>
      </div>
      <div className="ml-auto flex items-center">
        <span className="h-4 w-1 border-r border-l border-[#555c68]" />
        <dl className="ml-3 w-[94px] text-[10px] leading-[13px]">
          <NetStat k="U:" v="4.90 kbit/s" />
          <NetStat k="D:" v="76.84 kbit/s" />
        </dl>
        <button type="button" className="ml-[25px] flex w-[62px] items-center gap-2 leading-5">
          <Icon w={24} h={24}><circle cx="17" cy="7" r="6" fill="#f8a020" /><path d="M5 22a5 5 0 0 1 0-10q1-6 7-5 5 1 5 5a5 5 0 0 1 2 10z" fill="#b8d4f8" /><path d="M1 18q8 3 22 0-1 4-5 4H5q-3 0-4-4z" fill="#dce8fc" /></Icon>
          <span className="text-[13px]">30°C</span>
        </button>
        <Tool label="Show hidden icons" className="ml-[19px] h-10 w-6"><Icon w={12} h={8}><path d="M1 7l5-5 5 5" stroke="#fff" strokeWidth="1.500" /></Icon></Tool>
        <Tool label="Meet now" className="h-10 w-6"><Icon w={14} h={18}><rect x="2" y="5.500" width="7" height="7" rx="1" stroke="#fff" /><path d="M9 8l3-2v6l-3-2M3 2.500q4-3 8 0M3 15.500q4 3 8 0" stroke="#fff" /></Icon></Tool>
        <Tool label="OneDrive" className="h-10 w-6"><Icon w={18} h={12}><path d="M4 11a3.500 3.500 0 0 1 0-7q2-4 6-3 3 1 3 3 4 0 4 4 0 3-3 3z" fill="#e8e8e8" /></Icon></Tool>
        <Tool label="Battery" className="h-10 w-6"><Icon w={16} h={10}><path d="M.5.5h13v9H.5zM15 3v4" stroke="#fff" /><rect x="3" y="3" width="6" height="4" fill="#fff" /></Icon></Tool>
        <Tool label="Volume" className="h-10 w-6"><Icon w={16} h={14}><path d="M.5 5v4h2L6 12V2L2.500 5zM8.500 5q1.500 2 0 4M10.500 3q3 4 0 8" stroke="#fff" /><path d="M12.500 1q4 6 0 12" stroke="#999" /></Icon></Tool>
        <Tool label="Network" className="h-10 w-6"><Icon w={16} h={16}><path d="M4.500 2.500h11v8h-11zM10 11v3M6 14.500h8M.5.5h3v4h-3zM2 5v9h4" stroke="#fff" /></Icon></Tool>
        <Tool label="Pen" className="ml-[4px] h-10 w-6"><Icon w={18} h={16}><path d="M8 9l5-8 3 2-5 8-4 2zM7 13q-4 4-5 1t3-4q4 1 1 4M13 8l3 0-3 4" stroke="#fff" /></Icon></Tool>
        <span className="ml-[9px] text-[12px] leading-4">ENG</span>
        <time className="ml-[8px] w-[60px] text-center text-[12px] leading-[19px]">9:08 AM<br />6/12/2023</time>
        <Tool label="Notifications" className="relative ml-[7px] h-10 w-8">
          <Icon w={20} h={20}><path d="M1 1h16v13H7l-3 4v-4H1z" fill="#fff" /><path d="M4 5h10M4 8h10M4 11h6" stroke="#222" /></Icon>
          <span className="absolute right-0 bottom-[5px] flex size-[18px] items-center justify-center rounded-full border border-[#999] bg-[#333] text-[11px] leading-3">21</span>
        </Tool>
        <span className="ml-3 h-10 w-px bg-[#555c68]" />
        <span className="w-1" />
      </div>
    </div>
  );
}

export default function App() {
  return (
    <div className="flex h-screen flex-col overflow-hidden bg-[#e8e8e8] font-['Liberation_Sans',Arial,sans-serif] text-black">
      <Stipples />
      <TitleBar />
      <MenuBar />
      <Toolbars />
      <div className="flex min-h-0 flex-1">
        <SideBar />
        <main className="relative min-w-0 flex-1 bg-black">
          <Schematic />
          <MiniMap />
          <div className="pointer-events-none absolute right-[86px] bottom-[20px] w-[235px] font-['Open_Sans','Noto_Sans',sans-serif] whitespace-nowrap text-white/50">
            <p className="text-[19px] leading-6">Activate Windows</p>
            <p className="text-[14px] leading-5">Go to Settings to activate Windows.</p>
          </div>
        </main>
      </div>
      <StatusBar />
      <TaskBar />
    </div>
  );
}
